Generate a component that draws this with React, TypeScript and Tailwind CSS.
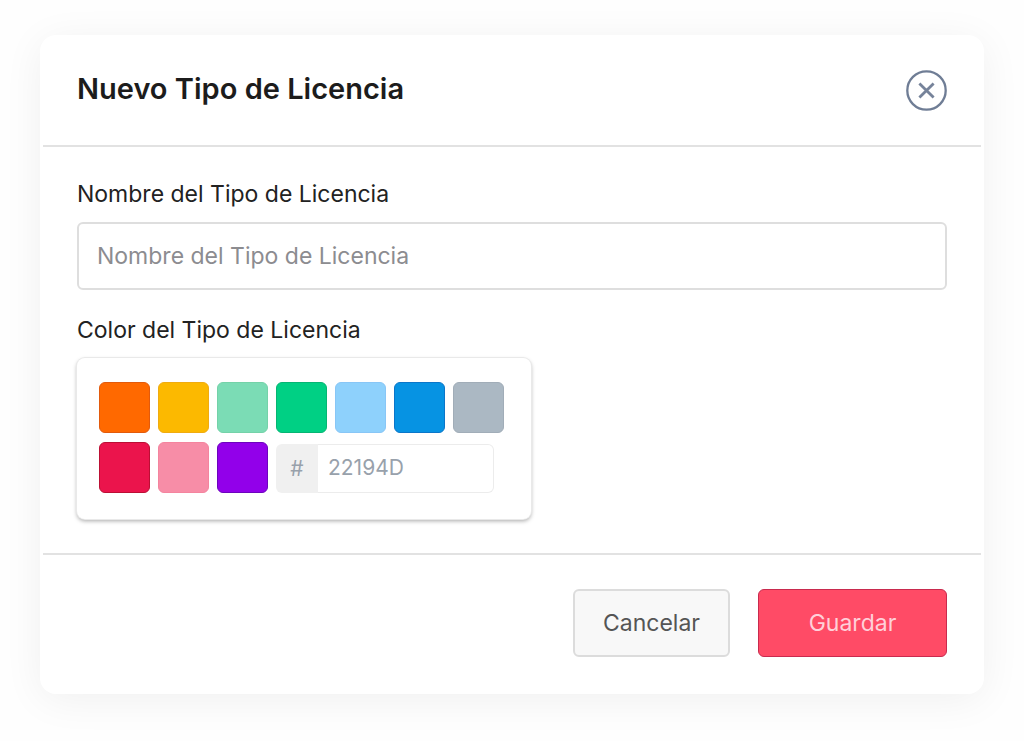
import React, { useState } from 'react';

const COLORS = [
    { name: 'Naranja', className: 'bg-[#ff6900] border-[#e25a0c]' },
    { name: 'Amarillo', className: 'bg-[#fcb900] border-[#f0ab10]' },
    { name: 'Menta', className: 'bg-[#7bdcb5] border-[#74d2a8]' },
    { name: 'Verde', className: 'bg-[#00d084] border-[#06b573]' },
    { name: 'Celeste', className: 'bg-[#8ed1fc] border-[#88c6f6]' },
    { name: 'Azul', className: 'bg-[#0693e3] border-[#0b76c9]' },
    { name: 'Gris', className: 'bg-[#abb8c3] border-[#a1adb8]' },
    { name: 'Rojo', className: 'bg-[#eb144c] border-[#bb0f34]' },
    { name: 'Rosa', className: 'bg-[#f78da7] border-[#f4849e]' },
    { name: 'Violeta', className: 'bg-[#9200ea] border-[#6d04bd]' },
];

const CloseIcon = () => (
    <svg viewBox="0 0 41 41" className="w-full h-full" fill="none">
        <circle cx="20.5" cy="20.5" r="19.2" stroke="#6f7d95" strokeWidth="2.3" />
        <path d="M13.4 13.4 L27.6 27.6 M27.6 13.4 L13.4 27.6" stroke="#76839a" strokeWidth="2.8" />
    </svg>
);

const ColorPicker: React.FC = () => {
    const [hex, setHex] = useState('22194D');

    return (
        <div
            role="group"
            aria-labelledby="color-label"
            className="max-w-full flex flex-wrap gap-x-2 gap-y-[9px] rounded-lg bg-white px-[22px] pt-6 pb-[26px] ring-1 ring-[#e9e9e9] shadow-[0_2px_4px_rgba(0,0,0,0.35)] md:w-[454px]"
        >
            {COLORS.map((c) => (
                <button key={c.name} type="button" aria-label={c.name} className={`size-[51px] rounded-md border ${c.className}`} />
            ))}
            <div className="flex h-[49px] mt-[2px] text-[21px] text-[#98a1ab]">
                <label htmlFor="hex" className="w-[42px] rounded-l-md bg-[#f0f0f0] flex items-center justify-center">#</label>
                <input
                    id="hex"
                    value={hex}
                    onChange={(e) => setHex(e.target.value)}
                    className="w-44 rounded-r-md border border-l-0 border-[#ececec] px-[10px] pb-[2px] outline-none"
                />
            </div>
        </div>
    );
};

export default function App() {
    const [name, setName] = useState('');

    return (
        <main className="min-h-screen bg-[#fefefe] px-10 py-[35px] font-['Inter',sans-serif] text-[23px] text-[#222]">
            <form className="rounded-2xl bg-white shadow-[0_6px_40px_rgba(0,0,0,0.06)]" onSubmit={(e) => e.preventDefault()}>
                <header className="flex items-start justify-between px-[37px] pt-[35px] pb-[34px]">
                    <h1 className="text-[29px] leading-[38px] font-semibold text-[#1c1c1c]">Nuevo Tipo de Licencia</h1>
                    <button type="button" aria-label="Cerrar" className="size-[41px] rounded-full">
                        <CloseIcon />
                    </button>
                </header>

                <hr className="mx-[3px] border-t-2 border-[#e2e2e2]" />

                {/* Fields */}
                <div className="px-[37px] pt-[31px] pb-[34px]">
                    <label htmlFor="name" className="block leading-8">Nombre del Tipo de Licencia</label>
                    <input
                        id="name"
                        value={name}
                        onChange={(e) => setName(e.target.value)}
                        placeholder="Nombre del Tipo de Licencia"
                        className="mt-3 w-full h-[68px] rounded-md border-2 border-[#dedede] px-[18px] outline-none placeholder:text-[#8c8c90]"
                    />
                    <div id="color-label" className="mt-6 mb-3 leading-8">Color del Tipo de Licencia</div>
                    <ColorPicker />
                </div>

                <hr className="mx-[3px] border-t-2 border-[#e2e2e2]" />

                <footer className="flex flex-wrap justify-end gap-7 px-[37px] pt-[34px] pb-[37px]">
                    <button type="button" className="w-[157px] h-[68px] rounded-md border-2 border-[#dcdcdc] bg-[#f8f8f8] text-[#555]">
                        Cancelar
                    </button>
                    <button type="submit" className="w-[189px] h-[68px] rounded-md border border-[#c92a4e] bg-[#ff4b66] text-[#ffd0d9]">
                        Guardar
                    </button>
                </footer>
            </form>
        </main>
    );
}
